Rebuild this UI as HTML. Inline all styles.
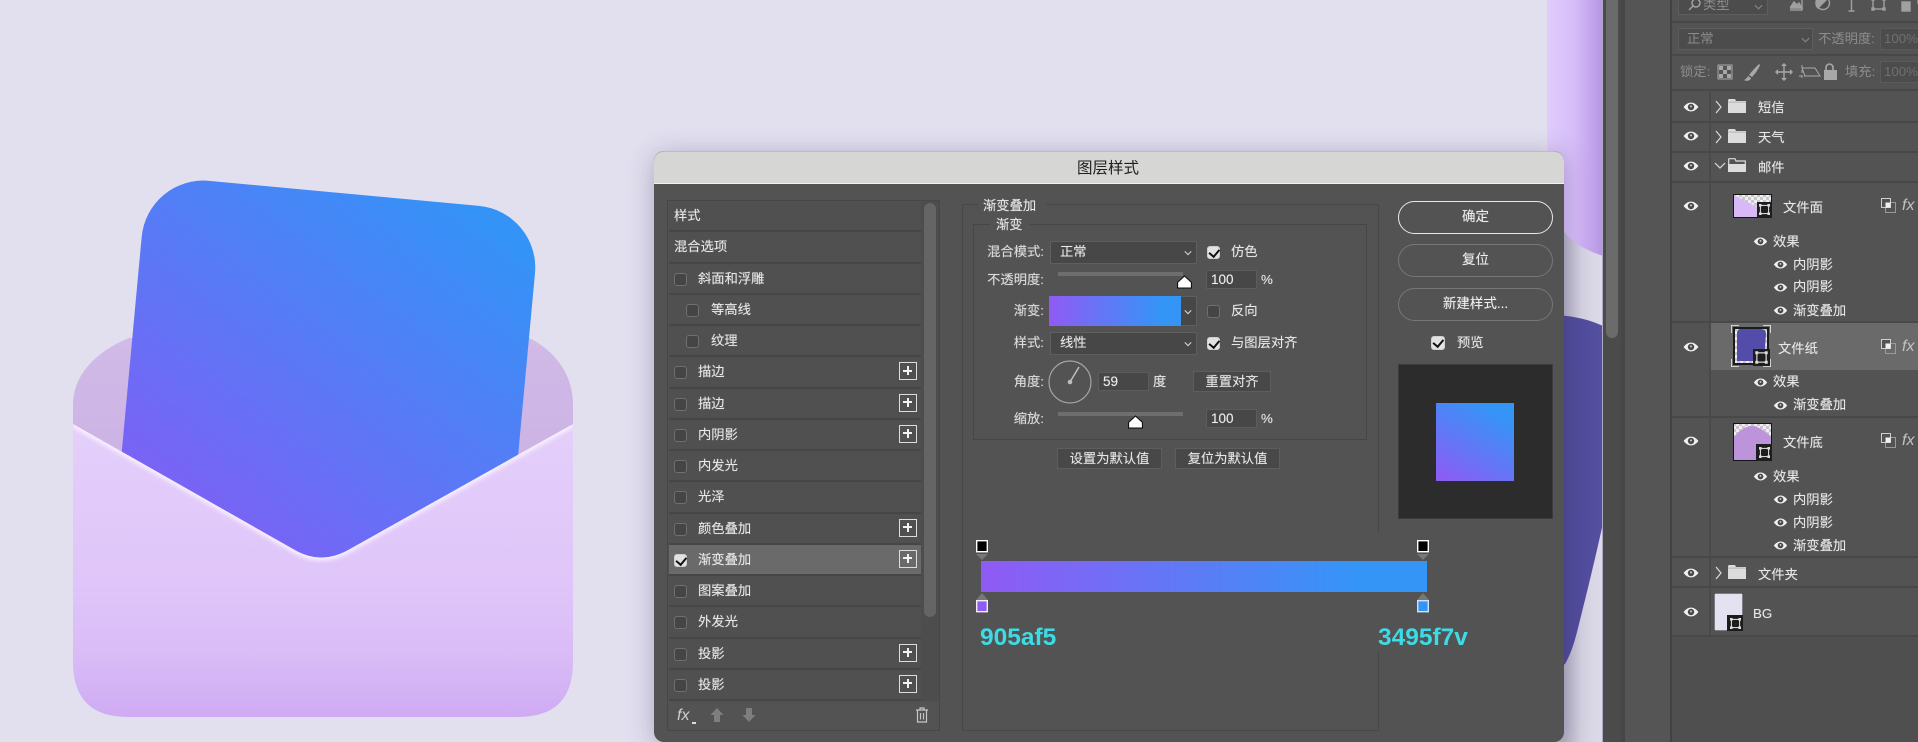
<!DOCTYPE html>
<html lang="zh"><head><meta charset="utf-8"><title>图层样式</title>
<style>
*{box-sizing:border-box}
html,body{margin:0;padding:0;width:1918px;height:742px;overflow:hidden;background:#e2e0ef}
body{position:relative;font-family:"Liberation Sans","Noto Sans CJK SC",sans-serif;font-size:13.3px;color:#e8e8e8;text-shadow:0 0 .7px rgba(255,255,255,.45)}
.a,.t,.cb,.sel,.inp,.btn,.pb,.lb,.eye,.eye2,.thumb{position:absolute}
.t{white-space:nowrap;line-height:16px}
.dlg{position:absolute;left:654px;top:151px;width:910px;height:591px;background:#535353;border-radius:10px;box-shadow:0 4px 26px rgba(55,45,95,.32);overflow:hidden}
.bar{position:absolute;left:654px;top:151px;width:910px;height:33px;background:#d6d6d5;border-radius:10px 10px 0 0;border-top:1px solid #bdbbc4;border-bottom:1px solid #f2f2f2;text-align:center;color:#202020;font-size:15.5px;line-height:33px;padding-right:2px;text-shadow:none}
.list{position:absolute;left:667px;top:200px;width:273px;height:531px;border:1px solid #474747;background:#515151}
.rows{position:absolute;left:1px;top:0;width:252px}
.r{position:relative;height:31.25px;background:#505050;border-bottom:2px solid #464646}
.r.s{background:#6a6a6a}
.r span{position:absolute;top:7px;line-height:16px;white-space:nowrap}
.r .cb{left:5px;top:9px}.r.i .cb{left:17px}
.cb{width:13px;height:13px;border:1.3px solid #6f6f6f;border-radius:3px;background:#454545}
.cb.on{background:#e2e2e2;border-color:#d0d0d0}
.cb.on::after{content:"";position:absolute;left:3.2px;top:.3px;width:4.6px;height:7.6px;border:solid #111;border-width:0 2.2px 2.2px 0;transform:rotate(40deg)}
.p{position:absolute;left:230px;top:5px;width:18px;height:18px;border:1.5px solid #dcdcdc}
.p::before{content:"";position:absolute;left:3px;top:6.5px;width:9px;height:2px;background:#f2f2f2}
.p::after{content:"";position:absolute;left:6.5px;top:3px;width:2px;height:9px;background:#f2f2f2}
.sel{background:#474747;border:1px solid #5f5f5f;border-radius:2px}
.inp{background:#474747;border:1px solid #5c5c5c;line-height:17px;padding-left:4px;font-size:13.5px;color:#eee}
.btn{background:#484848;border:1px solid #5d5d5d;text-align:center;line-height:19px;color:#e6e6e6}
.pb{left:1398px;width:155px;height:33px;border:1.4px solid #777;border-radius:17px;text-align:center;line-height:29px;color:#eee;font-size:13.5px}
.lab{position:absolute;width:80px;text-align:right;line-height:16px;white-space:nowrap;color:#dcdcdc}
.eye{width:16px;height:10px}.eye2{width:15px;height:9px}
.pl{position:absolute;left:1672px;top:0;width:246px;height:636px;background:#535353}
.dv{position:absolute;height:2px;background:#484848}
.dim{color:#8c8c8c;text-shadow:none}
.fx{font:italic 16px "Liberation Sans",sans-serif;color:#c2c2c2;text-shadow:none}
</style></head><body>
<svg width="0" height="0" style="position:absolute"><defs>
<pattern id="ck" width="6" height="6" patternUnits="userSpaceOnUse"><rect width="6" height="6" fill="#f0eef2"/><rect width="3" height="3" fill="#c9c7cc"/><rect x="3" y="3" width="3" height="3" fill="#c9c7cc"/></pattern>
<symbol id="e" viewBox="0 0 16 10"><path d="M.6 5C3 1.8 5.4.6 8 .6S13 1.8 15.4 5C13 8.2 10.6 9.400 8 9.400S3 8.200.6 5Z" fill="#f1f1f1"/><circle cx="8" cy="5" r="3.2" fill="#4a4a4a"/><circle cx="8" cy="4.400" r="1" fill="#cfcfcf"/></symbol>
<symbol id="c" viewBox="0 0 10 6"><path d="M1 1l4 4 4-4" fill="none" stroke="#d8d8d8" stroke-width="1.3"/></symbol>
<symbol id="th" viewBox="0 0 16 14"><path d="M8 .6 15.400 7.400V13.400H.6V7.400Z" fill="#fff" stroke="#111" stroke-width="1.2" stroke-linejoin="round"/></symbol>
<symbol id="sm" viewBox="0 0 15 15"><rect width="15" height="15" fill="#1d1d1d"/><rect x="3.400" y="3.400" width="8.200" height="8.200" fill="none" stroke="#e8e8e8"/><rect x="2" y="2" width="2.600" height="2.600" fill="#ddd"/><rect x="10.400" y="2" width="2.600" height="2.600" fill="#ddd"/><rect x="2" y="10.400" width="2.600" height="2.600" fill="#ddd"/><rect x="10.400" y="10.400" width="2.600" height="2.600" fill="#ddd"/></symbol>
<symbol id="lk" viewBox="0 0 15 15"><rect x="4.500" y="4.500" width="10" height="10" fill="none" stroke="#9a9a9a"/><rect x=".5" y=".5" width="9" height="9" fill="#535353" stroke="#cfcfcf"/><rect x="4.500" y="4.500" width="5" height="5" fill="#f0f0f0"/></symbol>
<symbol id="fo" viewBox="0 0 18 14"><path d="M0 1.500C0 .6.6 0 1.500 0H7L8 2H18V14H0Z" fill="#dcdcdc"/><rect x="0" y="2.600" width="18" height="1" fill="#b4b4b4"/></symbol>
<symbol id="fo2" viewBox="0 0 18 14"><path d="M.7 14V1.200C.7.9.9.7 1.200.7H7L8 3H17.300V14Z" fill="none" stroke="#dcdcdc" stroke-width="1.2"/><path d="M0 6H18V14H0Z" fill="#dcdcdc"/></symbol>
</defs></svg>

<!-- artwork -->
<svg class="a" style="left:0;top:0" width="1640" height="742" viewBox="0 0 1640 742">
<defs>
<linearGradient id="cardG" gradientUnits="userSpaceOnUse" x1="215" y1="560" x2="480" y2="215"><stop offset="0" stop-color="#7f5ff5"/><stop offset="1" stop-color="#3493f7"/></linearGradient>
<linearGradient id="flapG" x1="0" y1="0" x2="0" y2="1"><stop offset="0" stop-color="#e4cffa"/><stop offset=".55" stop-color="#dfc5f9"/><stop offset=".8" stop-color="#d9bbf6"/><stop offset="1" stop-color="#cfabf3"/></linearGradient>
<linearGradient id="backG" x1="0" y1="0" x2="0" y2="1"><stop offset="0" stop-color="#d0bae7"/><stop offset="1" stop-color="#c9aee3"/></linearGradient>
<linearGradient id="pur" x1="0" y1="0" x2="1" y2="0"><stop offset="0" stop-color="#dfcdfb"/><stop offset=".5" stop-color="#d6bcf8"/><stop offset="1" stop-color="#b594e4"/></linearGradient>
<linearGradient id="drk" x1="0" y1="0" x2="1" y2="0"><stop offset="0" stop-color="#4f4a97"/><stop offset="1" stop-color="#5450a0"/></linearGradient>
<linearGradient id="lgt" gradientUnits="userSpaceOnUse" x1="1564" y1="0" x2="1603" y2="0"><stop offset="0" stop-color="#b8b5c6"/><stop offset=".45" stop-color="#d5d2e2"/><stop offset="1" stop-color="#dddaea"/></linearGradient>
<filter id="bl" x="-10%" y="-10%" width="120%" height="120%"><feGaussianBlur stdDeviation="2"/></filter>
<clipPath id="flapC"><path d="M73 424L293 549Q321 566 350 549L573 424V662Q573 717 518 717H128Q73 717 73 662Z"/></clipPath>
<clipPath id="cardClip"><rect width="395" height="460" rx="62" transform="translate(147.400 175.100) rotate(5.3)"/></clipPath>
</defs>
<rect width="1640" height="742" fill="#e2e0ef"/>
<path d="M73 540V405C73 372 100 350 129 338H529C550 348 573 370 573 405V540Z" fill="url(#backG)"/>
<rect x="60" y="150" width="520" height="560" fill="url(#cardG)" clip-path="url(#cardClip)"/>
<path d="M73 424L293 549Q321 566 350 549L573 424V662Q573 717 518 717H128Q73 717 73 662Z" fill="url(#flapG)"/>
<g clip-path="url(#flapC)"><path d="M73 424L293 549Q321 566 350 549L573 424" fill="none" stroke="#f9f2ff" stroke-width="6" filter="url(#bl)"/></g>
<!-- right side canvas -->
<rect x="1550" y="200" width="53" height="542" fill="url(#lgt)"/>
<path d="M1547 0H1603V256C1585 250 1572 242 1564 232C1553 210 1547 170 1547 130Z" fill="url(#pur)"/>
<path d="M1555 315C1575 316 1590 320 1603 326V523C1595 560 1585 600 1577 632C1573 648 1569 657 1565 664L1555 670Z" fill="url(#drk)"/>
<rect x="1602" y="0" width="1.500" height="742" fill="#aeaac4"/>
</svg>

<!-- app chrome between canvas and panel -->
<div class="a" style="left:1603px;top:0;width:20px;height:742px;background:#4b4b4b"></div>
<div class="a" style="left:1606px;top:-4px;width:12px;height:342px;background:#6b6b6b;border-radius:6px"></div>
<div class="a" style="left:1621px;top:0;width:4px;height:742px;background:#474747"></div>
<div class="a" style="left:1625px;top:0;width:45px;height:742px;background:#555"></div>
<div class="a" style="left:1670px;top:0;width:2px;height:742px;background:#424242"></div>
<div class="a" style="left:1672px;top:636px;width:246px;height:106px;background:#4f4f4f"></div>

<!-- layers panel -->
<div class="pl"></div>
<div class="a" style="left:1678px;top:-4px;width:90px;height:19px;background:#4c4c4c;border:1px solid #5d5d5d"></div>
<svg class="a" style="left:1688px;top:-2px" width="13" height="13" fill="none" stroke="#a0a0a0" stroke-width="1.500"><circle cx="8" cy="5" r="4"/><path d="M5 8L1 12"/></svg>
<div class="t dim" style="left:1703px;top:-3px">类型</div>
<svg class="a" style="left:1754px;top:4px" width="9" height="6"><use href="#c" opacity=".4"/></svg>
<svg class="a" style="left:1790px;top:-4px" width="128" height="18" viewBox="0 0 128 18" fill="none" stroke="#a0a0a0" stroke-width="1.400"><rect x="-2" y="1" width="14" height="13"/><path d="M0 12l4-6 3 3 2-2 3 5Z" fill="#a0a0a0"/><circle cx="33" cy="7" r="6.500" fill="#4e4e4e"/><path d="M28 12L38 2A6.500 6.500 0 0 0 28 12Z" fill="#a0a0a0"/><path d="M56 3h11M61.500 3V15M58.500 15h6"/><rect x="83" y="3" width="11" height="10"/><rect x="82" y="2" width="2" height="2"/><rect x="93" y="2" width="2" height="2"/><rect x="82" y="12" width="2" height="2"/><rect x="93" y="12" width="2" height="2"/><rect x="112" y="6" width="8" height="9" fill="#a0a0a0"/><path d="M118 0h10v8"/></svg>
<div class="dv" style="left:1672px;top:21px;width:246px"></div>
<div class="a" style="left:1678px;top:28px;width:135px;height:22px;background:#4c4c4c;border:1px solid #5d5d5d"></div>
<div class="t dim" style="left:1687px;top:31px">正常</div>
<svg class="a" style="left:1801px;top:37px" width="9" height="6"><use href="#c" opacity=".4"/></svg>
<div class="t dim" style="left:1818px;top:31px">不透明度:</div>
<div class="a" style="left:1880px;top:28px;width:40px;height:22px;background:#4c4c4c;border:1px solid #5a5a5a"></div>
<div class="t" style="left:1884px;top:31px;color:#6f6f6f;text-shadow:none">100%</div>
<div class="dv" style="left:1672px;top:54px;width:246px"></div>
<div class="t dim" style="left:1680px;top:64px">锁定:</div>
<svg class="a" style="left:1716px;top:62px" width="125" height="22" viewBox="0 0 125 22" fill="#a8a8a8"><rect x="2" y="3" width="14" height="14" fill="none" stroke="#a8a8a8"/><rect x="3" y="4" width="4" height="4"/><rect x="11" y="4" width="4" height="4"/><rect x="7" y="8" width="4" height="4"/><rect x="3" y="12" width="4" height="4"/><rect x="11" y="12" width="4" height="4"/><path d="M43 2C40 5 36 9 33 13L36 15C40 11 43 6 44 3ZM32 14C31 16 30 17 28 18C31 20 35 18 35 16Z"/><path d="M61 10H75M68 3V17" stroke="#a8a8a8" stroke-width="1.400"/><path d="M68 1l-3 3h6ZM68 19l-3-3h6ZM59 10l3-3v6ZM77 10l-3-3v6Z"/><path d="M86 6H99L104 14H89Z" fill="none" stroke="#a8a8a8"/><path d="M86 3V17M83 14H101" stroke="#a8a8a8" stroke-dasharray="3 2" fill="none"/><path d="M111 10V7.500a3.500 3.500 0 0 1 7 0V10" fill="none" stroke="#a8a8a8" stroke-width="1.600" transform="translate(-1 -2)"/><rect x="108" y="8" width="13" height="10"/></svg>
<div class="t dim" style="left:1845px;top:64px">填充:</div>
<div class="a" style="left:1880px;top:61px;width:40px;height:22px;background:#4c4c4c;border:1px solid #5a5a5a"></div>
<div class="t" style="left:1884px;top:64px;color:#6f6f6f;text-shadow:none">100%</div>
<div class="dv" style="left:1672px;top:89px;width:246px"></div>

<div class="a" style="left:1710px;top:322px;width:208px;height:48px;background:#6a6a6a"></div>
<div class="a" style="left:1709px;top:90px;width:2px;height:546px;background:#4a4a4a"></div>
<div class="dv" style="left:1672px;top:121px;width:246px"></div>
<div class="dv" style="left:1672px;top:151px;width:246px"></div>
<div class="dv" style="left:1672px;top:181px;width:246px"></div>
<div class="dv" style="left:1672px;top:321px;width:246px"></div>
<div class="dv" style="left:1672px;top:416px;width:246px"></div>
<div class="dv" style="left:1672px;top:556px;width:246px"></div>
<div class="dv" style="left:1672px;top:586px;width:246px"></div>
<div class="dv" style="left:1672px;top:635px;width:246px"></div>

<svg class="eye" style="left:1683px;top:102px"><use href="#e"/></svg>
<svg class="eye" style="left:1683px;top:131px"><use href="#e"/></svg>
<svg class="eye" style="left:1683px;top:161px"><use href="#e"/></svg>
<svg class="eye" style="left:1683px;top:201px"><use href="#e"/></svg>
<svg class="eye" style="left:1683px;top:342px"><use href="#e"/></svg>
<svg class="eye" style="left:1683px;top:436px"><use href="#e"/></svg>
<svg class="eye" style="left:1683px;top:568px"><use href="#e"/></svg>
<svg class="eye" style="left:1683px;top:607px"><use href="#e"/></svg>

<svg class="a" style="left:1715px;top:100px" width="8" height="14"><path d="M1 1l5 6-5 6" fill="none" stroke="#dcdcdc" stroke-width="1.200"/></svg>
<svg class="a" style="left:1715px;top:130px" width="8" height="14"><path d="M1 1l5 6-5 6" fill="none" stroke="#dcdcdc" stroke-width="1.200"/></svg>
<svg class="a" style="left:1714px;top:162px" width="12" height="8"><path d="M1 1l5 5 5-5" fill="none" stroke="#dcdcdc" stroke-width="1.200"/></svg>
<svg class="a" style="left:1715px;top:566px" width="8" height="14"><path d="M1 1l5 6-5 6" fill="none" stroke="#dcdcdc" stroke-width="1.200"/></svg>
<svg class="a" style="left:1728px;top:99px" width="18" height="14"><use href="#fo"/></svg>
<svg class="a" style="left:1728px;top:129px" width="18" height="14"><use href="#fo"/></svg>
<svg class="a" style="left:1728px;top:158px" width="18" height="14"><use href="#fo2"/></svg>
<svg class="a" style="left:1728px;top:565px" width="18" height="14"><use href="#fo"/></svg>
<div class="t" style="left:1758px;top:100px">短信</div>
<div class="t" style="left:1758px;top:130px">天气</div>
<div class="t" style="left:1758px;top:160px">邮件</div>
<div class="t" style="left:1758px;top:567px">文件夹</div>

<!-- 文件面 -->
<svg class="a" style="left:1733px;top:194px" width="39" height="24" viewBox="0 0 39 24"><rect width="39" height="24" fill="url(#ck)"/><path d="M1 1L24 13V23H1Z" fill="#d8b8f6"/><rect x=".5" y=".5" width="38" height="23" fill="none" stroke="#151515"/><path d="M24 8H39V24H24Z" fill="#1d1d1d"/></svg>
<svg class="a" style="left:1757px;top:202px" width="15" height="15"><use href="#sm"/></svg>
<div class="t" style="left:1783px;top:200px">文件面</div>
<svg class="a" style="left:1881px;top:198px" width="15" height="15"><use href="#lk"/></svg>
<div class="t fx" style="left:1902px;top:197px">fx</div>
<svg class="eye2" style="left:1753px;top:237px"><use href="#e"/></svg><div class="t" style="left:1773px;top:234px">效果</div>
<svg class="eye2" style="left:1773px;top:260px"><use href="#e"/></svg><div class="t" style="left:1793px;top:257px">内阴影</div>
<svg class="eye2" style="left:1773px;top:283px"><use href="#e"/></svg><div class="t" style="left:1793px;top:279px">内阴影</div>
<svg class="eye2" style="left:1773px;top:306px"><use href="#e"/></svg><div class="t" style="left:1793px;top:303px">渐变叠加</div>

<!-- 文件纸 -->
<svg class="a" style="left:1731px;top:325px" width="40" height="42" viewBox="0 0 40 42"><rect x="2" y="2" width="36" height="38" fill="#1b1b1b"/><rect x="4" y="4" width="32" height="34" fill="url(#ck)"/><path d="M9 4H30Q35 4 35 9L33 36H6L6 9Q6 4 9 4Z" fill="#534ca8"/><path d="M0 8V0H8M32 0H40V8M0 34V42H8M40 34V42H32" fill="none" stroke="#f1f1f1" stroke-width="1.500"/></svg>
<svg class="a" style="left:1753px;top:349px" width="17" height="17"><use href="#sm"/></svg>
<div class="t" style="left:1778px;top:341px">文件纸</div>
<svg class="a" style="left:1881px;top:339px" width="15" height="15"><use href="#lk"/></svg>
<div class="t fx" style="left:1902px;top:338px">fx</div>
<svg class="eye2" style="left:1753px;top:378px"><use href="#e"/></svg><div class="t" style="left:1773px;top:374px">效果</div>
<svg class="eye2" style="left:1773px;top:401px"><use href="#e"/></svg><div class="t" style="left:1793px;top:397px">渐变叠加</div>

<!-- 文件底 -->
<svg class="a" style="left:1733px;top:423px" width="39" height="38" viewBox="0 0 39 38"><rect width="39" height="38" fill="url(#ck)"/><path d="M1 14C8 6 14 3 19 3S31 7 38 14V37H1Z" fill="#bd94dc"/><rect x=".5" y=".5" width="38" height="37" fill="none" stroke="#151515"/><rect x="23" y="21" width="16" height="17" fill="#1d1d1d"/></svg>
<svg class="a" style="left:1757px;top:445px" width="15" height="15"><use href="#sm"/></svg>
<div class="t" style="left:1783px;top:435px">文件底</div>
<svg class="a" style="left:1881px;top:433px" width="15" height="15"><use href="#lk"/></svg>
<div class="t fx" style="left:1902px;top:432px">fx</div>
<svg class="eye2" style="left:1753px;top:472px"><use href="#e"/></svg><div class="t" style="left:1773px;top:469px">效果</div>
<svg class="eye2" style="left:1773px;top:495px"><use href="#e"/></svg><div class="t" style="left:1793px;top:492px">内阴影</div>
<svg class="eye2" style="left:1773px;top:518px"><use href="#e"/></svg><div class="t" style="left:1793px;top:515px">内阴影</div>
<svg class="eye2" style="left:1773px;top:541px"><use href="#e"/></svg><div class="t" style="left:1793px;top:538px">渐变叠加</div>

<!-- BG -->
<svg class="a" style="left:1714px;top:593px" width="29" height="38" viewBox="0 0 29 38"><rect width="29" height="38" fill="#e4e2f1" stroke="#151515"/><rect x="13" y="22" width="16" height="16" fill="#1d1d1d"/></svg>
<svg class="a" style="left:1728px;top:616px" width="15" height="15"><use href="#sm"/></svg>
<div class="t" style="left:1753px;top:606px">BG</div>

<!-- dialog -->
<div class="dlg"></div>
<div class="bar">图层样式</div>

<div class="list">
 <div class="rows">
  <div class="r"><span style="left:5px">样式</span></div>
  <div class="r"><span style="left:5px">混合选项</span></div>
  <div class="r"><i class="cb"></i><span style="left:29px">斜面和浮雕</span></div>
  <div class="r i"><i class="cb"></i><span style="left:42px">等高线</span></div>
  <div class="r i"><i class="cb"></i><span style="left:42px">纹理</span></div>
  <div class="r"><i class="cb"></i><span style="left:29px">描边</span><b class="p"></b></div>
  <div class="r"><i class="cb"></i><span style="left:29px">描边</span><b class="p"></b></div>
  <div class="r"><i class="cb"></i><span style="left:29px">内阴影</span><b class="p"></b></div>
  <div class="r"><i class="cb"></i><span style="left:29px">内发光</span></div>
  <div class="r"><i class="cb"></i><span style="left:29px">光泽</span></div>
  <div class="r"><i class="cb"></i><span style="left:29px">颜色叠加</span><b class="p"></b></div>
  <div class="r s"><i class="cb on"></i><span style="left:29px">渐变叠加</span><b class="p"></b></div>
  <div class="r"><i class="cb"></i><span style="left:29px">图案叠加</span></div>
  <div class="r"><i class="cb"></i><span style="left:29px">外发光</span></div>
  <div class="r"><i class="cb"></i><span style="left:29px">投影</span><b class="p"></b></div>
  <div class="r"><i class="cb"></i><span style="left:29px">投影</span><b class="p"></b></div>
 </div>
 <div class="a" style="left:253px;top:0;width:18px;height:500px;background:#4d4d4d"></div>
 <div class="a" style="left:256px;top:2px;width:12px;height:414px;background:#656565;border-radius:6px"></div>
 <div class="a" style="left:1px;top:501px;width:270px;height:28px;background:#535353"></div>
</div>
<div class="t fx" style="left:677px;top:707px;color:#d0d0d0">fx</div>
<div class="a" style="left:692px;top:722px;width:4px;height:2px;background:#ddd"></div>
<svg class="a" style="left:710px;top:708px" width="14" height="14"><path d="M7 0l6.500 7H10V14H4V7H.5Z" fill="#7e7e7e"/></svg>
<svg class="a" style="left:742px;top:708px" width="14" height="14"><path d="M7 14L.5 7H4V0H10V7H13.500Z" fill="#7e7e7e"/></svg>
<svg class="a" style="left:915px;top:707px" width="14" height="16" fill="none" stroke="#c6c6c6" stroke-width="1.200"><path d="M1 3H13M5 3V1H9V3M2.500 3V15H11.500V3M5.500 6V12.500M8.500 6V12.500"/></svg>

<!-- fieldsets -->
<div class="a" style="left:962px;top:204px;width:417px;height:527px;border:1.5px solid #474747;border-radius:2px"></div>
<div class="a" style="left:1370px;top:533px;width:16px;height:118px;background:#535353"></div>
<div class="a" style="left:973px;top:224px;width:394px;height:216px;border:1.5px solid #474747"></div>
<div class="a" style="left:978px;top:198px;width:68px;height:16px;background:#535353"></div>
<div class="t" style="left:983px;top:198px">渐变叠加</div>
<div class="a" style="left:990px;top:216px;width:40px;height:16px;background:#535353"></div>
<div class="t" style="left:996px;top:217px">渐变</div>

<div class="lab" style="left:964px;top:244px">混合模式:</div>
<div class="sel" style="left:1050px;top:241px;width:147px;height:23px"></div>
<div class="t" style="left:1060px;top:244px">正常</div>
<svg class="a" style="left:1184px;top:250px" width="8" height="6"><use href="#c"/></svg>
<div class="cb on" style="left:1207px;top:246px"></div>
<div class="t" style="left:1231px;top:244px">仿色</div>

<div class="lab" style="left:964px;top:272px">不透明度:</div>
<div class="a" style="left:1058px;top:272px;width:125px;height:4px;background:#6e6e6e"></div>
<svg class="a" style="left:1177px;top:275px" width="15" height="14"><use href="#th"/></svg>
<div class="inp" style="left:1206px;top:270px;width:51px;height:19px">100</div>
<div class="t" style="left:1261px;top:272px">%</div>

<div class="lab" style="left:964px;top:303px">渐变:</div>
<div class="a" style="left:1049px;top:296px;width:132px;height:30px;background:linear-gradient(90deg,#905af5,#3495f7 85%)"></div>
<div class="a" style="left:1181px;top:296px;width:16px;height:30px;background:#474747;border:1px solid #5f5f5f;border-left:0"></div>
<svg class="a" style="left:1184px;top:309px" width="8" height="6"><use href="#c"/></svg>
<div class="cb" style="left:1207px;top:305px"></div>
<div class="t" style="left:1231px;top:303px">反向</div>

<div class="lab" style="left:964px;top:335px">样式:</div>
<div class="sel" style="left:1050px;top:332px;width:147px;height:23px"></div>
<div class="t" style="left:1060px;top:335px">线性</div>
<svg class="a" style="left:1184px;top:341px" width="8" height="6"><use href="#c"/></svg>
<div class="cb on" style="left:1207px;top:337px"></div>
<div class="t" style="left:1231px;top:335px">与图层对齐</div>

<div class="lab" style="left:964px;top:374px">角度:</div>
<svg class="a" style="left:1048px;top:360px" width="44" height="44"><circle cx="22" cy="22" r="21" fill="none" stroke="#a4a4a4" stroke-width="1.200"/><path d="M22 22L31 7" stroke="#bdbdbd" stroke-width="1.500"/><circle cx="22" cy="22" r="2.300" fill="#bdbdbd"/></svg>
<div class="inp" style="left:1098px;top:372px;width:51px;height:19px">59</div>
<div class="t" style="left:1153px;top:374px">度</div>
<div class="btn" style="left:1193px;top:371px;width:78px;height:21px">重置对齐</div>

<div class="lab" style="left:964px;top:411px">缩放:</div>
<div class="a" style="left:1058px;top:412px;width:125px;height:4px;background:#6e6e6e"></div>
<svg class="a" style="left:1128px;top:415px" width="15" height="14"><use href="#th"/></svg>
<div class="inp" style="left:1206px;top:409px;width:51px;height:19px">100</div>
<div class="t" style="left:1261px;top:411px">%</div>

<div class="btn" style="left:1057px;top:448px;width:105px;height:21px">设置为默认值</div>
<div class="btn" style="left:1175px;top:448px;width:105px;height:21px">复位为默认值</div>

<!-- right buttons -->
<div class="pb" style="top:201px;border-color:#e8e8e8">确定</div>
<div class="pb" style="top:244px">复位</div>
<div class="pb" style="top:288px">新建样式...</div>
<div class="cb on" style="left:1431px;top:336px;width:14px;height:14px"></div>
<div class="t" style="left:1457px;top:335px">预览</div>
<div class="a" style="left:1398px;top:364px;width:155px;height:155px;background:#2c2c2c;border:1px solid #3c3c3c"></div>
<div class="a" style="left:1436px;top:403px;width:78px;height:78px;background:linear-gradient(31deg,#905af5,#3495f7 85%)"></div>

<!-- gradient bar -->
<div class="a" style="left:981px;top:561px;width:446px;height:31px;background:linear-gradient(90deg,#905af5,#3495f7 85%)"></div>
<svg class="a" style="left:976px;top:540px" width="12" height="21"><rect x=".7" y=".7" width="10.600" height="11" fill="#000" stroke="#fff" stroke-width="1.400"/><path d="M0 14H12L6 20Z" fill="#777"/></svg>
<svg class="a" style="left:1417px;top:540px" width="12" height="21"><rect x=".7" y=".7" width="10.600" height="11" fill="#000" stroke="#fff" stroke-width="1.400"/><path d="M0 14H12L6 20Z" fill="#777"/></svg>
<svg class="a" style="left:976px;top:593px" width="12" height="20"><path d="M0 7H12L6 0Z" fill="#777"/><rect x=".7" y="7.700" width="10.600" height="11" fill="#905af5" stroke="#efefef" stroke-width="1.400"/></svg>
<svg class="a" style="left:1417px;top:593px" width="12" height="20"><path d="M0 7H12L6 0Z" fill="#777"/><rect x=".7" y="7.700" width="10.600" height="11" fill="#3495f7" stroke="#cfe3f7" stroke-width="1.400"/></svg>
<div class="t" style="left:980px;top:624px;font-size:24.5px;line-height:28px;font-weight:bold;color:#3cdbe6;text-shadow:none">905af5</div>
<div class="t" style="left:1378px;top:624px;font-size:24.5px;line-height:28px;font-weight:bold;color:#3cdbe6;text-shadow:none">3495f7v</div>
</body></html>
